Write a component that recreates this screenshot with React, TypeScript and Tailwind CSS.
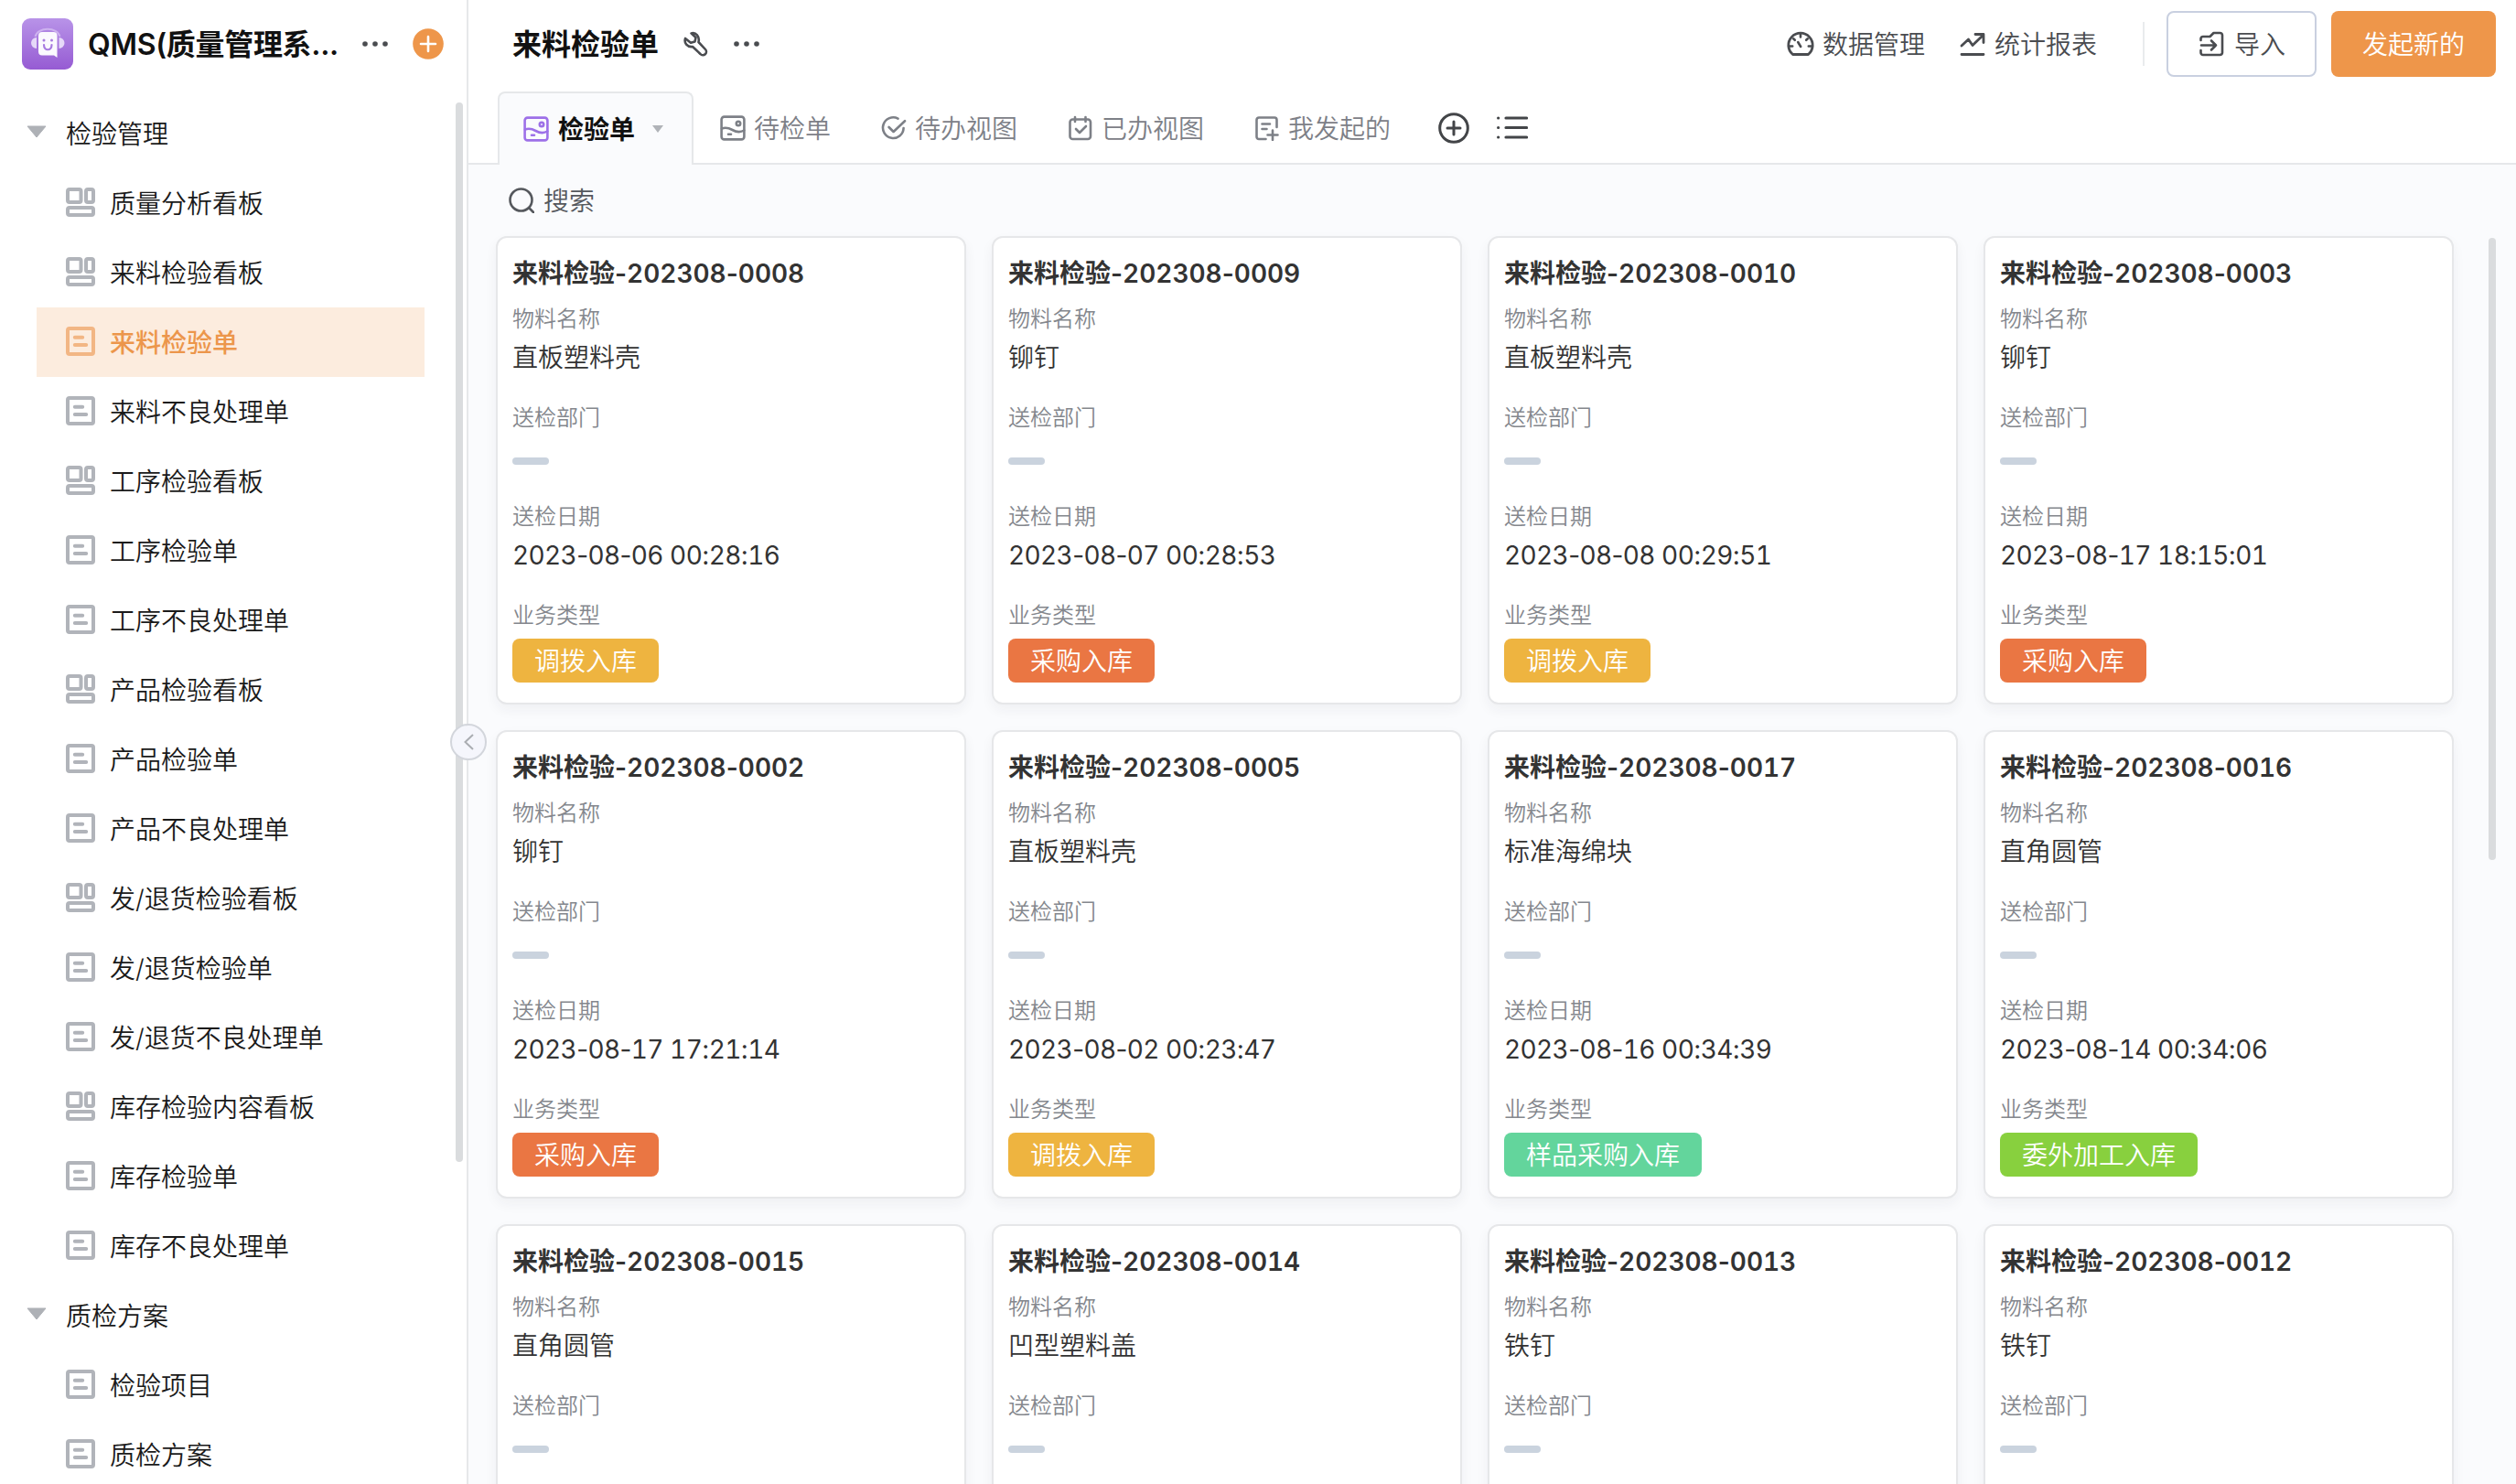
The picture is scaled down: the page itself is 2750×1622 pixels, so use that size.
import React from 'react';

type IconProps = { className?: string };

const Svg = ({ className, children, box = 28 }: { className?: string; children: React.ReactNode; box?: number }) => (
    <svg
        className={className}
        viewBox={`0 0 ${box} ${box}`}
        fill="none"
        stroke="currentColor"
        strokeWidth={2.6}
        strokeLinecap="round"
        strokeLinejoin="round"
    >
        {children}
    </svg>
);

const BoardIcon = ({ className }: IconProps) => (
    <svg className={className} viewBox="0 0 32 32" fill="none" stroke="currentColor" strokeWidth={4}>
        <rect x="2" y="2" width="14.5" height="14" rx="2"/>
        <rect x="22" y="2" width="8" height="14" rx="2"/>
        <rect x="2" y="22" width="28" height="8" rx="2"/>
    </svg>
);

const FormIcon = ({ className }: IconProps) => (
    <svg className={className} viewBox="0 0 32 32" fill="none" stroke="currentColor" strokeLinecap="round">
        <rect x="2" y="2" width="28" height="28" rx="2" strokeWidth={4}/>
        <path d="M9.8 11.8h8.4M9.8 20h12.4" strokeWidth={4}/>
    </svg>
);

const GalleryIcon = ({ className }: IconProps) => (
    <Svg className={className}>
        <rect x="1.6" y="1.6" width="24.8" height="24.8" rx="3"/>
        <path d="M2 14.500c4-1.500 7-1 11.500 1.500s8.500 3 12.800 .5M9 20.800h3"/>
        <circle cx="20" cy="9" r="2.200"/>
    </Svg>
);

const CheckCircleIcon = ({ className }: IconProps) => (
    <Svg className={className}>
        <path d="M18.500 3.600A11.300 11.300 0 1 0 24.600 14M8.600 13l5 5L26 6.200"/>
    </Svg>
);

const CalendarCheckIcon = ({ className }: IconProps) => (
    <Svg className={className}>
        <rect x="2.500" y="4.500" width="22.500" height="21.500" rx="3"/>
        <path d="M8 2v5M19.500 2v5M9 15l4 4 7-7"/>
    </Svg>
);

const FormPlusIcon = ({ className }: IconProps) => (
    <Svg className={className}>
        <path d="M12.500 26H5a2.500 2.500 0 0 1-2.500-2.500V5A2.500 2.500 0 0 1 5 2.500h17A2.500 2.500 0 0 1 24.500 5v8M8.500 9.500h8.500M8.500 15h5M20 16.500v10.500M14.500 21.500h11"/>
    </Svg>
);

const GaugeIcon = ({ className }: IconProps) => (
    <Svg className={className} box={30}>
        <path d="M6.500 26.500A13.200 13.200 0 1 1 23.500 26.500Z" strokeWidth={2.8}/>
        <path d="M15 5v2.500M7.200 9.300l1.600 1.500M22.800 9.300l-1.600 1.500M3 17.500h3.200M23.800 17.500H27M12.200 13l3 5" strokeWidth={2.6}/>
    </Svg>
);

const TrendIcon = ({ className }: IconProps) => (
    <Svg className={className}>
        <path d="M2 16l7.500-7 4.500 6.500L26 4M17 3.500h9v9M2 25.500h24" strokeWidth={2.8}/>
    </Svg>
);

const ImportIcon = ({ className }: IconProps) => (
    <Svg className={className}>
        <path d="M2.500 10V8A2.500 2.500 0 0 1 5 6h7.500L16.500 2h7A2.500 2.500 0 0 1 26 4.500v19A2.500 2.500 0 0 1 23.500 26H5a2.500 2.500 0 0 1-2.500-2.500V21M3 15.500h16M14 10.500l5 5-5 5"/>
    </Svg>
);

const WrenchIcon = ({ className }: IconProps) => (
    <Svg className={className}>
        <path d="M9.500 2.400l5 4.600-1 4.500-4.500 1.300L3 8C1.500 13 5 17.800 11 17l8.500 8a3.600 3.600 0 0 0 5.500-5L17.500 12C19 5.500 14.500 1 9.500 2.400Z"/>
    </Svg>
);

const Dots = ({ className }: IconProps) => (
    <svg className={className} viewBox="0 0 28 28" fill="currentColor">
        <circle cx="3" cy="14" r="2.800"/>
        <circle cx="14" cy="14" r="2.800"/>
        <circle cx="25" cy="14" r="2.800"/>
    </svg>
);

const SearchIcon = ({ className }: IconProps) => (
    <Svg className={className}>
        <circle cx="13.500" cy="13.500" r="12"/>
        <path d="M22.500 22.500L27 27"/>
    </Svg>
);

const Logo = () => (
    <svg className="size-14 shrink-0" viewBox="0 0 56 56">
        <defs>
            <linearGradient id="logo" x1="0" y1="0" x2="0" y2="1">
                <stop offset="0" stopColor="#b893e8"/>
                <stop offset="1" stopColor="#965bd3"/>
            </linearGradient>
        </defs>
        <rect width="56" height="56" rx="9" fill="url(#logo)"/>
        <path d="M14.500 20c2.500-11 24.500-11 27 0" fill="none" stroke="#cdb2ef" strokeWidth="2"/>
        <path d="M16 21a6 6 0 0 0 0 12zM40.500 21a6 6 0 0 1 0 12z" fill="#e6d9f8"/>
        <path d="M22 15h12.500a4 4 0 0 1 4 4V43l-3.500-2.500H22a4 4 0 0 1-4-4V19a4 4 0 0 1 4-4z" fill="#fbf9fe"/>
        <circle cx="24" cy="24" r="1.500" fill="#a87be0"/>
        <circle cx="32.500" cy="24" r="1.500" fill="#a87be0"/>
        <path d="M24 29c0 7 8.500 7 8.500 0" fill="none" stroke="#a87be0" strokeWidth="2.200" strokeLinecap="round"/>
    </svg>
);

const groups = [
    {
        title: '检验管理',
        items: [
            { icon: 'board', name: '质量分析看板' },
            { icon: 'board', name: '来料检验看板' },
            { icon: 'form', name: '来料检验单', active: true },
            { icon: 'form', name: '来料不良处理单' },
            { icon: 'board', name: '工序检验看板' },
            { icon: 'form', name: '工序检验单' },
            { icon: 'form', name: '工序不良处理单' },
            { icon: 'board', name: '产品检验看板' },
            { icon: 'form', name: '产品检验单' },
            { icon: 'form', name: '产品不良处理单' },
            { icon: 'board', name: '发/退货检验看板' },
            { icon: 'form', name: '发/退货检验单' },
            { icon: 'form', name: '发/退货不良处理单' },
            { icon: 'board', name: '库存检验内容看板' },
            { icon: 'form', name: '库存检验单' },
            { icon: 'form', name: '库存不良处理单' },
        ],
    },
    {
        title: '质检方案',
        items: [
            { icon: 'form', name: '检验项目' },
            { icon: 'form', name: '质检方案' },
        ],
    },
];

const tagColors: Record<string, string> = {
    调拨入库: 'bg-[#eeb440]',
    采购入库: 'bg-[#ea7643]',
    样品采购入库: 'bg-[#63d59c]',
    委外加工入库: 'bg-[#88d03e]',
};

const cards = [
    { no: '0008', material: '直板塑料壳', date: '2023-08-06 00:28:16', type: '调拨入库' },
    { no: '0009', material: '铆钉', date: '2023-08-07 00:28:53', type: '采购入库' },
    { no: '0010', material: '直板塑料壳', date: '2023-08-08 00:29:51', type: '调拨入库' },
    { no: '0003', material: '铆钉', date: '2023-08-17 18:15:01', type: '采购入库' },
    { no: '0002', material: '铆钉', date: '2023-08-17 17:21:14', type: '采购入库' },
    { no: '0005', material: '直板塑料壳', date: '2023-08-02 00:23:47', type: '调拨入库' },
    { no: '0017', material: '标准海绵块', date: '2023-08-16 00:34:39', type: '样品采购入库' },
    { no: '0016', material: '直角圆管', date: '2023-08-14 00:34:06', type: '委外加工入库' },
    { no: '0015', material: '直角圆管', date: '', type: '' },
    { no: '0014', material: '凹型塑料盖', date: '', type: '' },
    { no: '0013', material: '铁钉', date: '', type: '' },
    { no: '0012', material: '铁钉', date: '', type: '' },
];

const tabs = [
    { icon: GalleryIcon, name: '待检单' },
    { icon: CheckCircleIcon, name: '待办视图' },
    { icon: CalendarCheckIcon, name: '已办视图' },
    { icon: FormPlusIcon, name: '我发起的' },
];

const Sidebar = () => (
    <aside className="flex w-[512px] shrink-0 flex-col border-r-2 border-[#e6e8ea] bg-white">
        <div className="flex h-24 shrink-0 items-center pl-6">
            <Logo/>
            <h1 className="ml-4 w-[276px] whitespace-nowrap pt-0.5 text-[32px] font-semibold tracking-[-0.3px] text-[#111]">QMS(质量管理系...</h1>
            <Dots className="ml-6 size-7 text-[#4a4c50]"/>
            <svg className="ml-[27px] size-[34px]" viewBox="0 0 34 34">
                <circle cx="17" cy="17" r="16.800" fill="#ee964a"/>
                <path d="M17 9v16M9 17h16" stroke="#fff" strokeWidth="2.600" strokeLinecap="round"/>
            </svg>
        </div>
        <div className="flex min-h-0 grow justify-between pt-3 pr-1">
            <nav className="w-[464px] pl-10">
                {groups.map((group) => (
                    <div key={group.title}>
                        <div className="-ml-3 flex h-[76px] items-center text-[28px] text-[#1a1a1a]">
                            <svg className="mt-[-4px] h-[14px] w-[24px]" viewBox="0 0 24 14">
                                <path d="M2 1h20L12 13z" fill="#aeb1b6" stroke="#aeb1b6" strokeLinejoin="round"/>
                            </svg>
                            <span className="ml-5 pt-0.5">{group.title}</span>
                        </div>
                        {group.items.map((item) => {
                            const Icon = item.icon === 'board' ? BoardIcon : FormIcon;
                            return (
                                <div
                                    key={item.name}
                                    className={`flex h-[76px] items-center gap-4 pl-8 text-[28px] ${item.active ? 'bg-[#fcecde] font-medium text-[#ec964b]' : 'text-[#1a1a1a]'}`}
                                >
                                    <Icon className={`mb-0.5 size-8 ${item.active ? 'text-[#f2b684]' : 'text-[#b1b4ba]'}`}/>
                                    <span className="pt-px">{item.name}</span>
                                </div>
                            );
                        })}
                    </div>
                ))}
            </nav>
            <div className="mt-1 h-[1158px] w-2 rounded-full bg-[#dadcde]"/>
        </div>
    </aside>
);

const Header = () => (
    <header className="flex h-24 shrink-0 items-center justify-between pr-[22px] pl-12">
        <div className="flex items-center">
            <h2 className="pt-0.5 text-[32px] font-semibold text-[#111]">来料检验单</h2>
            <WrenchIcon className="ml-[26px] size-7 text-[#4a4c50]"/>
            <Dots className="ml-7 size-7 text-[#4a4c50]"/>
        </div>
        <div className="flex items-center text-[28px] text-[#4a4c50]">
            <GaugeIcon className="size-[30px]"/>
            <span className="ml-[9px] pt-0.5">数据管理</span>
            <TrendIcon className="ml-[38px] size-7"/>
            <span className="ml-[10px] pt-0.5">统计报表</span>
            <div className="ml-[50px] h-12 w-0.5 bg-[#e9ebed]"/>
            <button className="ml-6 flex h-[72px] w-[164px] items-center justify-center gap-[11px] rounded-lg border-2 border-[#c9d0e0] pl-px">
                <ImportIcon className="size-7"/>
                <span className="pt-0.5">导入</span>
            </button>
            <button className="ml-4 h-[72px] w-[180px] rounded-lg bg-[#ee964a] pt-0.5 text-white">发起新的</button>
        </div>
    </header>
);

const TabBar = () => (
    <div className="flex h-[84px] shrink-0 items-end">
        <div className="h-full w-8 border-b-2 border-[#e6e8ea]"/>
        <div className="flex h-20 w-[214px] items-center rounded-t-lg border-2 border-b-0 border-[#e6e8ea] bg-[#fafbfd] pl-[26px]">
            <GalleryIcon className="size-7 text-[#9d70e8]"/>
            <span className="ml-[10px] pt-0.5 text-[28px] font-semibold text-[#111]">检验单</span>
            <svg className="ml-[19px] h-2 w-3" viewBox="0 0 12 8">
                <path d="M0 0h12L6 8z" fill="#b0b3b8"/>
            </svg>
        </div>
        <div className="flex h-full grow items-center border-b-2 border-[#e6e8ea] pt-[5px] pl-[29px] text-[#7d8087]">
            {tabs.map((tab) => (
                <div key={tab.name} className="mr-[55px] flex items-center gap-[9px]">
                    <tab.icon className="size-7"/>
                    <span className="pt-0.5 text-[28px]">{tab.name}</span>
                </div>
            ))}
            <svg className="-ml-[3px] size-[34px] text-[#434548]" viewBox="0 0 34 34" fill="none" stroke="currentColor" strokeWidth={3} strokeLinecap="round">
                <circle cx="17" cy="17" r="15.300"/>
                <path d="M17 10v14M10 17h14"/>
            </svg>
            <svg className="ml-[30px] size-[34px] text-[#434548]" viewBox="0 0 34 34" fill="none" stroke="currentColor" strokeWidth={3.2} strokeLinecap="round">
                <path d="M10 6h22.500M10 16.500h22.500M10 27h22.500M1.600 6h.1M1.600 16.500h.1M1.600 27h.1"/>
            </svg>
        </div>
    </div>
);

// equal-width digits, punctuation keeps its own width
const Digits = ({ text }: { text: string }) => (
    <>
        {text.split(/(\d+)/).map((part, i) => (
            <span key={i} className={/\d/.test(part) ? 'tabular-nums' : ''}>{part}</span>
        ))}
    </>
);

const Field = ({ label, children }: { label: string; children: React.ReactNode }) => (
    <div className="h-[108px]">
        <div className="text-[24px] leading-9 text-[#84878d]">{label}</div>
        {children}
    </div>
);

const Card = ({ card }: { card: (typeof cards)[number] }) => (
    <div className="h-[512px] rounded-xl border-2 border-[#e6e7e9] bg-white px-4 pt-[19px] text-[28px] text-[#333] shadow-[0_6px_14px_rgba(30,40,60,0.05)]">
        <h3 className="mb-[12px] leading-10 font-semibold"><Digits text={`来料检验-202308-${card.no}`}/></h3>
        <Field label="物料名称">
            <div className="pt-1 leading-10">{card.material}</div>
        </Field>
        <Field label="送检部门">
            <div className="mt-[25px] h-2 w-10 rounded-full bg-[#cad3de]"/>
        </Field>
        {card.date && (
            <Field label="送检日期">
                <div className="pt-1 leading-10 font-normal tracking-[-0.62px] whitespace-pre"><Digits text={card.date}/></div>
            </Field>
        )}
        {card.type && (
            <Field label="业务类型">
                <span className={`mt-[7px] inline-block h-12 rounded-lg px-6 leading-[50px] text-white ${tagColors[card.type]}`}>{card.type}</span>
            </Field>
        )}
    </div>
);

const App = () => {
    return (
        <div className="relative flex h-[1622px] w-[2750px] overflow-hidden bg-white font-[Inter,'Noto_Sans_CJK_SC',sans-serif] font-[350]">
            <Sidebar/>
            <main className="flex min-w-0 grow flex-col">
                <Header/>
                <TabBar/>
                <section className="flex min-h-0 grow flex-col bg-[#fafbfd]">
                    <div className="flex h-[78px] shrink-0 items-center gap-[10px] pl-[44px] text-[28px] text-[#55585d]">
                        <SearchIcon className="size-7"/>
                        <span className="pt-px">搜索</span>
                    </div>
                    <div className="flex min-h-0 grow pl-[30px]">
                        <div className="grid w-[2140px] grid-cols-4 content-start gap-7">
                            {cards.map((card) => (
                                <Card key={card.no} card={card}/>
                            ))}
                        </div>
                        <div className="mt-[2px] ml-[38px] h-[680px] w-2 rounded-full bg-[#dadcde]"/>
                    </div>
                </section>
            </main>
            <button className="absolute top-[791px] left-[492px] flex size-10 items-center justify-center rounded-full border-2 border-[#d3d6dc] bg-[#f5f6fc]">
                <svg className="h-5 w-3" viewBox="0 0 12 20" fill="none" stroke="#aaadb2" strokeWidth="2">
                    <path d="M11 2L2.500 10l8.500 8"/>
                </svg>
            </button>
        </div>
    );
};

export default App;
